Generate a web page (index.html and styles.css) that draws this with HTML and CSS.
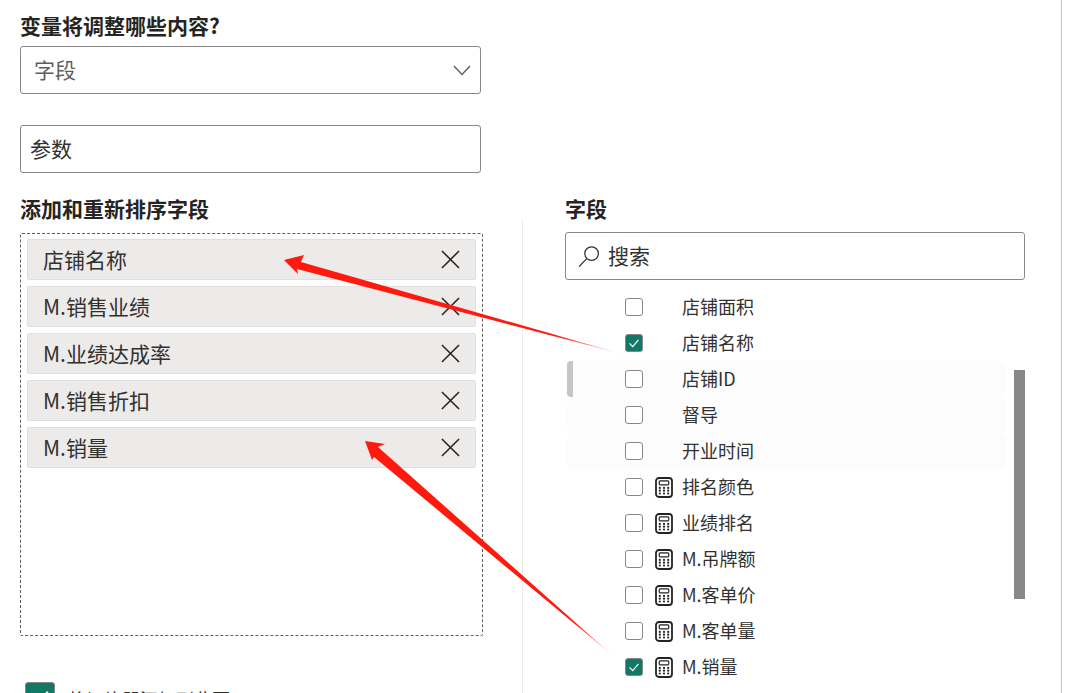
FILE: index.html
```html
<!DOCTYPE html>
<html lang="zh-CN">
<head>
<meta charset="utf-8">
<title>字段参数</title>
<link rel="stylesheet" href="styles.css">
</head>
<body>
<svg width="0" height="0" class="defs">
  <symbol id="calc" viewBox="0 0 18 21">
    <rect x="1" y="1" width="16" height="19" rx="3" fill="none" stroke="#252423" stroke-width="1.8"/>
    <rect x="4.2" y="3.8" width="9.6" height="4" rx="1" fill="none" stroke="#252423" stroke-width="1.2"/>
    <g fill="#252423">
      <circle cx="4.8" cy="10.9" r="1.1"/><circle cx="9" cy="10.9" r="1.1"/><circle cx="13.2" cy="10.9" r="1.1"/>
      <circle cx="4.8" cy="13.7" r="1.1"/><circle cx="9" cy="13.7" r="1.1"/><circle cx="13.2" cy="13.7" r="1.1"/>
      <circle cx="4.8" cy="16.5" r="1.1"/><circle cx="9" cy="16.5" r="1.1"/><circle cx="13.2" cy="16.5" r="1.1"/>
    </g>
  </symbol>
  <symbol id="tick" viewBox="0 0 18 18">
    <path d="M4 9.4 L7.6 13 L14 5.6" fill="none" stroke="#fff" stroke-width="1.3"/>
  </symbol>
  <symbol id="cross" viewBox="0 0 20 20">
    <path d="M1 1 L19 19 M19 1 L1 19" fill="none" stroke="#252423" stroke-width="1.6"/>
  </symbol>
</svg>
<main class="page">
  <section class="left">
    <h2 class="title">变量将调整哪些内容?</h2>
    <div class="box select">
      <span>字段</span>
      <svg class="chev" width="18" height="11" viewBox="0 0 18 11"><path d="M1 1 L9 9.5 L17 1" fill="none" stroke="#605e5c" stroke-width="1.4"/></svg>
    </div>
    <div class="box name"><span>参数</span></div>
    <h2 class="title sub">添加和重新排序字段</h2>
    <div class="drop">
      <div class="chip"><span>店铺名称</span><svg class="x"><use href="#cross"/></svg></div>
      <div class="chip"><span>M.销售业绩</span><svg class="x"><use href="#cross"/></svg></div>
      <div class="chip"><span>M.业绩达成率</span><svg class="x"><use href="#cross"/></svg></div>
      <div class="chip"><span>M.销售折扣</span><svg class="x"><use href="#cross"/></svg></div>
      <div class="chip"><span>M.销量</span><svg class="x"><use href="#cross"/></svg></div>
    </div>
    <div class="foot">
      <span class="bigcheck"><svg class="bigtick" viewBox="0 0 18 18"><use href="#tick"/></svg></span>
      <span class="foottext">将切片器添加到此页</span>
    </div>
  </section>
  <section class="right">
    <h2 class="title">字段</h2>
    <div class="box search">
      <svg class="mag" width="22" height="22" viewBox="0 0 22 22"><circle cx="13.6" cy="8.6" r="6.8" fill="none" stroke="#323130" stroke-width="1.2"/><path d="M8.8 13.6 L1 21.6" fill="none" stroke="#323130" stroke-width="1.3"/></svg>
      <span>搜索</span>
    </div>
    <div class="list">
      <div class="row"><i class="cb"></i><b class="ic"></b><span>店铺面积</span></div>
      <div class="row"><i class="cb on"><svg><use href="#tick"/></svg></i><b class="ic"></b><span>店铺名称</span></div>
      <div class="row hl first"><i class="cb"></i><b class="ic"></b><span>店铺ID</span></div>
      <div class="row hl"><i class="cb"></i><b class="ic"></b><span>督导</span></div>
      <div class="row hl"><i class="cb"></i><b class="ic"></b><span>开业时间</span></div>
      <div class="row"><i class="cb"></i><svg class="ic"><use href="#calc"/></svg><span>排名颜色</span></div>
      <div class="row"><i class="cb"></i><svg class="ic"><use href="#calc"/></svg><span>业绩排名</span></div>
      <div class="row"><i class="cb"></i><svg class="ic"><use href="#calc"/></svg><span>M.吊牌额</span></div>
      <div class="row"><i class="cb"></i><svg class="ic"><use href="#calc"/></svg><span>M.客单价</span></div>
      <div class="row"><i class="cb"></i><svg class="ic"><use href="#calc"/></svg><span>M.客单量</span></div>
      <div class="row"><i class="cb on"><svg><use href="#tick"/></svg></i><svg class="ic"><use href="#calc"/></svg><span>M.销量</span></div>
      <div class="row"><i class="cb"></i><svg class="ic"><use href="#calc"/></svg><span>M.销售额</span></div>
      <div class="thumb"></div>
    </div>
  </section>
  <div class="edge"></div>
</main>
<svg class="arrows" width="1069" height="693" viewBox="0 0 1069 693">
  <defs>
    <linearGradient id="fadeA" gradientUnits="userSpaceOnUse" x1="284" y1="260" x2="622" y2="354"><stop offset="0.8" stop-color="#ff1a10"/><stop offset="1" stop-color="#ff1a10" stop-opacity="0.1"/></linearGradient>
    <linearGradient id="fadeB" gradientUnits="userSpaceOnUse" x1="365" y1="441" x2="612" y2="655"><stop offset="0.85" stop-color="#ff1a10"/><stop offset="1" stop-color="#ff1a10" stop-opacity="0.1"/></linearGradient>
  </defs>
  <path d="M284 260 L304 255 L301 262 L622 354 L297 269 L298 274 Z" fill="url(#fadeA)"/>
  <path d="M365 441 L385 444 L378 447 L612 655 L374 457 L372 460 Z" fill="url(#fadeB)"/>
</svg>
</body>
</html>
```
FILE: styles.css
```css
* { box-sizing: border-box; }
html, body { margin: 0; height: 693px; overflow: hidden; background: #fff; }
body {
  font-family: "Noto Sans CJK SC", "Noto Sans", sans-serif;
  color: #323130;
  position: relative;
}
.defs { position: absolute; }
.page { display: flex; height: 693px; overflow: hidden; }
.left { width: 503px; flex: none; padding: 11px 0 0 20px; }
.right { flex: none; width: 539px; margin-top: 220px; margin-left: 19px; padding: 0 0 0 42px; border-left: 1px solid #edebe9; }
.title {
  margin: 0;
  font-size: 21px;
  line-height: 28px;
  font-weight: 700;
  color: #252423;
}
.box {
  border: 1px solid #8a8886;
  border-radius: 3px;
  height: 48px;
  width: 461px;
  font-size: 21px;
  display: flex;
  align-items: center;
}
.box span { margin-top: -2px; }
.title + .select { margin-top: 7px; }
.select { padding: 0 9px 0 13px; justify-content: space-between; color: #605e5c; }
.name { margin-top: 31px; padding-left: 9px; }
.sub { margin-top: 21px; }
.drop {
  margin-top: 11px;
  width: 463px;
  height: 403px;
  border: 1px dashed #605e5c;
  border-radius: 2px;
  padding: 5px 6px;
  display: flex;
  flex-direction: column;
  gap: 6px;
}
.chip {
  height: 41px;
  flex: none;
  background: #edebe9;
  border: 1px solid #e1dfdd;
  border-radius: 2px;
  padding: 0 15px;
  display: flex;
  align-items: center;
  justify-content: space-between;
  font-size: 21px;
}
.chip span { margin-top: -2px; }
.x { width: 19px; height: 19px; }
.foot { margin-top: 46px; margin-left: 5px; display: flex; gap: 13px; align-items: flex-start; }
.bigcheck { width: 30px; height: 30px; background: #117865; border: 1px solid #8a8886; border-radius: 3px; flex: none; }
.bigtick { display: block; width: 28px; height: 28px; }
.foottext { font-size: 18px; line-height: 18px; margin-top: 8px; }
.right .title { margin-top: -26px; }
.search { margin-top: 10px; width: 460px; padding-left: 12px; gap: 8px; }
.list { margin-top: 9px; position: relative; width: 460px; }
.row {
  height: 36px;
  display: flex;
  align-items: center;
  padding-left: 60px;
  font-size: 18px;
}
.row span { margin-top: -2px; }
.hl { background: #fcfcfc; margin-left: 2px; padding-left: 58px; width: 439px; border-radius: 6px; }
.first { position: relative; }
.first::before { content: ""; position: absolute; left: 0; top: 0; bottom: 0; width: 6px; background: #c8c6c4; border-radius: 4px 0 0 4px; }
.cb { width: 18px; height: 18px; flex: none; border: 1px solid #8a8886; border-radius: 3px; background: #fff; display: block; }
.cb svg { width: 16px; height: 16px; display: block; }
.on { background: #117865; }
.ic { width: 18px; height: 21px; flex: none; margin: 0 9px 0 12px; display: block; }
.thumb { position: absolute; right: 0; top: 81px; width: 11px; height: 229px; background: #8a8886; }
.edge { width: 1px; height: 693px; background: #c8c6c4; flex: none; }
.arrows { position: absolute; left: 0; top: 0; pointer-events: none; }
```
